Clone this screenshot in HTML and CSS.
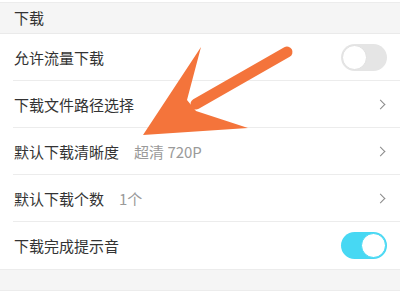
FILE: index.html
```html
<!DOCTYPE html>
<html>
<head>
<meta charset="utf-8">
<link rel="stylesheet" href="styles.css">
</head>
<body>
<div class="page">
  <div class="top"></div>
  <div class="section-title">下载</div>
  <div class="list">
    <div class="row">
      <span class="label">允许流量下载</span>
      <span class="switch"><span class="knob"></span></span>
    </div>
    <div class="row">
      <span class="label">下载文件路径选择</span>
      <span class="chev"></span>
    </div>
    <div class="row">
      <span class="label">默认下载清晰度</span>
      <span class="value">超清 720P</span>
      <span class="chev"></span>
    </div>
    <div class="row">
      <span class="label">默认下载个数</span>
      <span class="value">1个</span>
      <span class="chev"></span>
    </div>
    <div class="row last">
      <span class="label">下载完成提示音</span>
      <span class="switch on"><span class="knob"></span></span>
    </div>
  </div>
  <div class="footer-gap"></div>
  <svg class="arrow" width="400" height="300" viewBox="0 0 400 300">
    <line x1="287" y1="52" x2="196" y2="104" stroke="#f4743b" stroke-width="11" stroke-linecap="round"/>
    <polygon points="143,135 201,47 187,100 196,111 248,128" fill="#f4743b"/>
  </svg>
</div>
</body>
</html>
```

FILE: styles.css
```css
html, body {
  margin: 0;
  padding: 0;
  background: #ffffff;
}
.page {
  position: relative;
  width: 400px;
  height: 300px;
  overflow: hidden;
  font-family: "Noto Sans CJK SC", "Noto Sans", sans-serif;
  color: #333333;
}
.top {
  height: 2px;
  background: #ffffff;
  border-bottom: 1px solid #ececec;
}
.section-title {
  height: 30px;
  line-height: 30px;
  padding-left: 14px;
  font-size: 15px;
  background: #f5f5f5;
  border-bottom: 1px solid #eaeaea;
}
.list {
  background: #ffffff;
}
.row {
  display: flex;
  align-items: center;
  height: 46px;
  margin-left: 13px;
  padding-right: 13px;
  border-bottom: 1px solid #ececec;
  font-size: 15px;
}
.row.last {
  border-bottom: none;
  height: 47px;
}
.label {
  padding-left: 1px;
}
.value {
  margin-left: 15px;
  color: #9a9a9a;
  font-size: 15px;
}
.chev {
  margin-left: auto;
  width: 6px;
  height: 6px;
  border-right: 1.5px solid #8a8a8a;
  border-top: 1.5px solid #8a8a8a;
  transform: rotate(45deg);
  margin-right: 3px;
}
.switch {
  margin-left: auto;
  position: relative;
  width: 46px;
  height: 27px;
  border-radius: 14px;
  background: #e5e5e5;
  box-sizing: border-box;
}
.switch .knob {
  position: absolute;
  left: 1px;
  top: 1px;
  width: 25px;
  height: 25px;
  box-sizing: border-box;
  border-radius: 50%;
  background: #ffffff;
  border: 1px solid #e0e0e0;
}
.switch.on {
  background: #47d8f3;
}
.switch.on .knob {
  left: auto;
  right: 1px;
  border: 1.5px solid #47d8f3;
}
.footer-gap {
  height: 20px;
  background: #f5f5f5;
  border-top: 1px solid #ececec;
  border-bottom: 1px solid #ececec;
}
.arrow {
  position: absolute;
  left: 0;
  top: 0;
}
```
